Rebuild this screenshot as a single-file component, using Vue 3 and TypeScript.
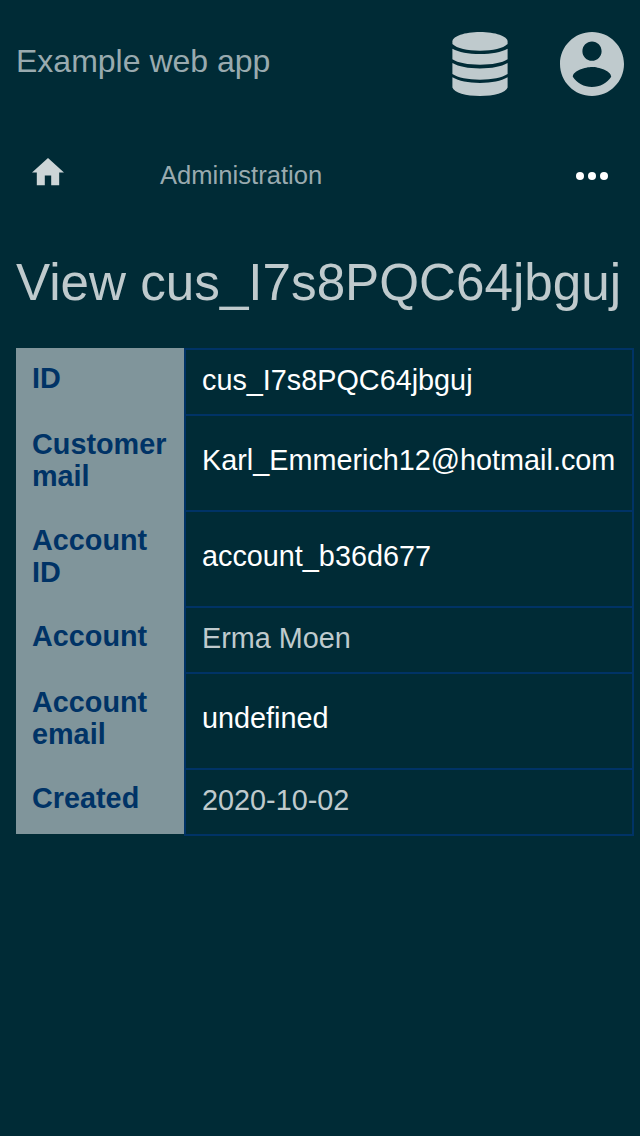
<script setup lang="ts">
interface Field {
  label: string
  value: string
  link?: boolean
  tall?: boolean
}

const fields: Field[] = [
  { label: 'ID', value: 'cus_I7s8PQC64jbguj' },
  { label: 'Customer mail', value: 'Karl_Emmerich12@hotmail.com', tall: true },
  { label: 'Account ID', value: 'account_b36d677', tall: true },
  { label: 'Account', value: 'Erma Moen', link: true },
  { label: 'Account email', value: 'undefined', tall: true },
  { label: 'Created', value: '2020-10-02', link: true },
]
</script>

<template>
  <div class="page">
    <header class="header">
      <span class="brand">Example web app</span>
      <svg class="database" viewBox="0 0 56 64" aria-hidden="true">
        <path d="M.4 9.500C.4 4.200 12.700 0 28 0S55.600 4.200 55.600 9.500v2.500C51 16.400 41 18.700 28 18.700S5 16.400.4 12z" />
        <path d="M.4 16.700C7 20.300 16 22 28 22s21-1.700 27.600-5.300v10.600C50 31 40 32.700 28 32.700S6 31 .4 27.300z" />
        <path d="M.4 31C7 34.700 16 36.400 28 36.400s21-1.700 27.600-5.400v11C50 45.700 40 47.700 28 47.700S6 45.700.4 42z" />
        <path d="M.4 45.300C7 49 16 50.900 28 50.900s21-1.900 27.600-5.600V55.500C54 60.500 42 64 28 64S2 60.500.4 55.500z" />
      </svg>
      <svg class="user" viewBox="2 2 20 20" aria-hidden="true">
        <path d="M12 2C6.48 2 2 6.48 2 12s4.48 10 10 10 10-4.480 10-10S17.520 2 12 2zm0 3c1.660 0 3 1.340 3 3s-1.340 3-3 3-3-1.340-3-3 1.340-3 3-3zm0 14.200c-2.500 0-4.710-1.280-6-3.220.030-1.990 4-3.080 6-3.080 1.990 0 5.970 1.090 6 3.080-1.290 1.940-3.500 3.220-6 3.220z" />
      </svg>
    </header>

    <nav class="nav">
      <svg class="home" viewBox="2 3 20 17" aria-hidden="true">
        <path d="M10 20v-6h4v6h5v-8h3L12 3 2 12h3v8z" />
      </svg>
      <span class="crumb">Administration</span>
      <svg class="more" viewBox="0 0 32 8" aria-hidden="true">
        <circle cx="4" cy="4" r="4" />
        <circle cx="16" cy="4" r="4" />
        <circle cx="28" cy="4" r="4" />
      </svg>
    </nav>

    <h1 class="title">View cus_I7s8PQC64jbguj</h1>

    <dl class="fields">
      <div v-for="field in fields" :key="field.label" class="row" :class="{ tall: field.tall }">
        <dt class="label">{{ field.label }}</dt>
        <dd class="value" :class="{ link: field.link }">{{ field.value }}</dd>
      </div>
    </dl>
  </div>
</template>

<style>
body {
  background: #002b36;
}
</style>

<style scoped>
.page {
  box-sizing: border-box;
  height: 1136px;
  overflow: hidden;
  background: #002b36;
  color: #fff;
  font-family: "Liberation Sans", Arial, sans-serif;
}

.header {
  display: flex;
  align-items: center;
  height: 128px;
  padding: 0 16px;
}

.brand {
  flex: 1;
  padding-bottom: 6px;
  font-size: 32px;
  line-height: 36px;
  color: #99aaaf;
}

.database {
  width: 56px;
  height: 64px;
  margin-right: 52px;
  fill: #bfcacd;
}

.user {
  width: 64px;
  height: 64px;
  fill: #bfcacd;
}

.nav {
  display: flex;
  align-items: center;
  height: 96px;
  padding: 0 32px;
}

.home {
  width: 32px;
  height: 27.2px;
  margin-bottom: 8px;
  fill: #ccd5d7;
}

.crumb {
  flex: 1;
  margin-left: 96px;
  padding-bottom: 2px;
  font-size: 25.6px;
  line-height: 30px;
  color: #99aaaf;
}

.more {
  width: 32px;
  height: 8px;
  fill: #fff;
}

.title {
  margin: 0;
  padding: 29px 16px 35px;
  font-size: 51.2px;
  font-weight: 400;
  line-height: 60px;
  white-space: nowrap;
  color: #bfcacd;
}

.fields {
  width: 618px;
  margin: 0 0 0 16px;
  font-size: 28.8px;
  line-height: 32px;
}

.row {
  display: flex;
  height: 66px;
}

.row.tall {
  height: 96px;
}

.label {
  box-sizing: border-box;
  width: 168px;
  padding: 14px 16px;
  background: #80959b;
  color: #003366;
  font-weight: 700;
}

.value {
  box-sizing: border-box;
  display: flex;
  flex: 1;
  align-items: center;
  margin: 0 0 -2px;
  padding: 0 16px 4px;
  border: 2px solid #003366;
  white-space: nowrap;
}

.tall .value {
  padding-bottom: 6px;
}

.link {
  color: #bfcacd;
}
</style>
